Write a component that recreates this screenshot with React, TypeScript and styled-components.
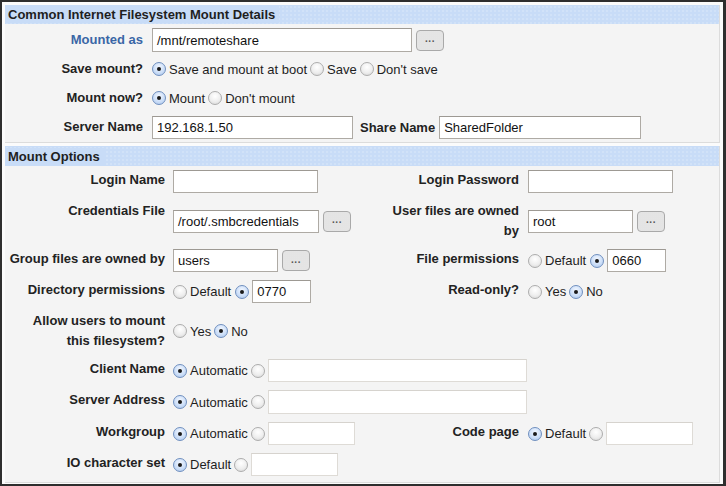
import React from "react";
import styled, { createGlobalStyle } from "styled-components";

const GlobalStyle = createGlobalStyle`
  html, body {
    margin: 0;
    padding: 0;
    background: #ffffff;
  }
  body {
    font-family: "Liberation Sans", Arial, sans-serif;
    font-size: 13px;
    color: #1e1e1e;
  }
`;

const dots = `radial-gradient(circle, rgba(255, 255, 255, 0.55) 0.5px, transparent 0.8px)`;

const Frame = styled.div`
  width: 726px;
  height: 486px;
  box-sizing: border-box;
  border: 2px solid #2e2e2e;
  border-right-width: 3px;
  background: #fbfbfb;
  padding: 3px 3px 2px 3px;
  display: flex;
  flex-direction: column;
  gap: 3px;
  overflow: hidden;
`;

const Section = styled.div<{ $grow?: boolean }>`
  background: #f4f4f4;
  border-right: 1px solid #dcdcdc;
  border-bottom: 1px solid #dcdcdc;
  display: flex;
  flex-direction: column;
  flex: ${(p) => (p.$grow ? 1 : "none")};
`;

const Header = styled.div<{ $h: number }>`
  height: ${(p) => p.$h}px;
  background-color: #c8dcf7;
  background-image: ${dots};
  background-size: 4px 4px;
  display: flex;
  align-items: center;
`;

const HeaderTitle = styled.span`
  background: #c8dcf7;
  font-weight: bold;
  font-size: 13px;
  color: #1f1f1f;
  padding: 0 4px 0 3px;
  line-height: 17px;
`;

const DetailsBody = styled.div`
  display: grid;
  grid-template-columns: 147px 1fr;
  grid-auto-rows: 24px;
  row-gap: 5px;
  padding: 4px 0 3px 0;
`;

const OptionsBody = styled.div`
  display: grid;
  grid-template-columns: 168px 215px 140px 1fr;
  row-gap: 8px;
  padding: 4px 0 6px 0;
`;

const Label = styled.div<{ $blue?: boolean }>`
  font-weight: bold;
  text-align: right;
  line-height: 20px;
  padding-right: 9px;
  color: ${(p) => (p.$blue ? "#3a66a6" : "#222222")};
  align-self: start;
`;

const DetailLabel = styled(Label)`
  align-self: center;
`;

const OptLabel = styled(Label)<{ $wide?: boolean }>`
  padding-left: ${(p) => (p.$wide ? 1 : 0)}px;
  padding-right: ${(p) => (p.$wide ? 9 : 8)}px;
`;

const Value = styled.div<{ $span?: number }>`
  display: flex;
  align-items: center;
  align-self: center;
  grid-column: span ${(p) => p.$span ?? 1};
  min-height: 23px;
`;

const TextInput = styled.div<{ $w: number; $h?: number; $off?: boolean }>`
  width: ${(p) => p.$w}px;
  height: ${(p) => p.$h ?? 23}px;
  box-sizing: border-box;
  background: #ffffff;
  border: 1px solid ${(p) => (p.$off ? "#dedbd6" : "#aeaaa4")};
  border-top-color: ${(p) => (p.$off ? "#d6d3ce" : "#9d9993")};
  padding: 0 4px;
  display: flex;
  align-items: center;
  font-size: 13px;
  color: #111111;
  white-space: nowrap;
  overflow: hidden;
`;

const DotsButton = styled.div`
  width: 28px;
  height: 21px;
  box-sizing: border-box;
  margin-left: 4px;
  border: 1px solid #a9a9a9;
  border-radius: 4px;
  background-color: #ededed;
  background-image: radial-gradient(circle, rgba(205, 205, 205, 0.9) 0.5px, transparent 0.8px);
  background-size: 2px 2px;
  display: flex;
  align-items: center;
  justify-content: center;
  font-size: 10px;
  font-weight: bold;
  letter-spacing: 0.5px;
  color: #555555;
  line-height: 1;
  padding-bottom: 2px;
`;

const Option = styled.span<{ $gapAfter?: number }>`
  display: inline-flex;
  align-items: center;
  margin-right: ${(p) => p.$gapAfter ?? 3}px;
  white-space: nowrap;
`;

const RadioDot = styled.span<{ $on: boolean }>`
  width: 14px;
  height: 14px;
  box-sizing: border-box;
  border-radius: 50%;
  margin-right: 3px;
  position: relative;
  flex: none;
  border: 1px solid ${(p) => (p.$on ? "#6f8fbf" : "#adadad")};
  background: ${(p) =>
    p.$on
      ? "radial-gradient(circle at 50% 35%, #f2f7ff 0%, #cddff8 55%, #a9c4ea 100%)"
      : "radial-gradient(circle at 50% 35%, #ffffff 0%, #eeeeee 55%, #d4d4d4 100%)"};
  &::after {
    content: "";
    display: ${(p) => (p.$on ? "block" : "none")};
    position: absolute;
    left: 50%;
    top: 50%;
    width: 4px;
    height: 4px;
    margin: -2px 0 0 -2px;
    border-radius: 50%;
    background: #1a1a1a;
  }
`;

const Inline = styled.span<{ $ml?: number }>`
  margin-left: ${(p) => p.$ml ?? 0}px;
  display: inline-flex;
  align-items: center;
`;

const InlineLabel = styled(Inline)`
  font-weight: bold;
  color: #222222;
`;

function Radio({ on, text, after }: { on: boolean; text?: string; after?: number }) {
  return (
    <Option $gapAfter={after}>
      <RadioDot $on={on} />
      {text}
    </Option>
  );
}

export default function App() {
  return (
    <>
      <GlobalStyle />
      <Frame>
        <Section>
          <Header $h={19}>
            <HeaderTitle>Common Internet Filesystem Mount Details</HeaderTitle>
          </Header>
          <DetailsBody>
            <DetailLabel $blue>Mounted as</DetailLabel>
            <Value>
              <TextInput $w={260} $h={24}>/mnt/remoteshare</TextInput>
              <DotsButton>...</DotsButton>
            </Value>

            <DetailLabel>Save mount?</DetailLabel>
            <Value>
              <Radio on text="Save and mount at boot" />
              <Radio on={false} text="Save" />
              <Radio on={false} text="Don't save" />
            </Value>

            <DetailLabel>Mount now?</DetailLabel>
            <Value>
              <Radio on text="Mount" />
              <Radio on={false} text="Don't mount" />
            </Value>

            <DetailLabel>Server Name</DetailLabel>
            <Value>
              <TextInput $w={201}>192.168.1.50</TextInput>
              <InlineLabel $ml={7}>Share Name</InlineLabel>
              <Inline $ml={4}>
                <TextInput $w={202}>SharedFolder</TextInput>
              </Inline>
            </Value>
          </DetailsBody>
        </Section>

        <Section $grow>
          <Header $h={20}>
            <HeaderTitle>Mount Options</HeaderTitle>
          </Header>
          <OptionsBody>
            <OptLabel>Login Name</OptLabel>
            <Value>
              <TextInput $w={145}></TextInput>
            </Value>
            <OptLabel $wide>Login Password</OptLabel>
            <Value>
              <TextInput $w={145}></TextInput>
            </Value>

            <OptLabel>Credentials File</OptLabel>
            <Value>
              <TextInput $w={146}>/root/.smbcredentials</TextInput>
              <DotsButton>...</DotsButton>
            </Value>
            <OptLabel $wide>User files are owned by</OptLabel>
            <Value>
              <TextInput $w={105}>root</TextInput>
              <DotsButton>...</DotsButton>
            </Value>

            <OptLabel>Group files are owned by</OptLabel>
            <Value>
              <TextInput $w={105}>users</TextInput>
              <DotsButton>...</DotsButton>
            </Value>
            <OptLabel $wide>File permissions</OptLabel>
            <Value>
              <Radio on={false} text="Default" after={4} />
              <Radio on after={0} />
              <TextInput $w={59}>0660</TextInput>
            </Value>

            <OptLabel>Directory permissions</OptLabel>
            <Value>
              <Radio on={false} text="Default" after={4} />
              <Radio on after={0} />
              <TextInput $w={59}>0770</TextInput>
            </Value>
            <OptLabel $wide>Read-only?</OptLabel>
            <Value>
              <Radio on={false} text="Yes" />
              <Radio on text="No" />
            </Value>

            <OptLabel>
              Allow users to mount
              <br />
              this filesystem?
            </OptLabel>
            <Value $span={3}>
              <Radio on={false} text="Yes" />
              <Radio on text="No" />
            </Value>

            <OptLabel>Client Name</OptLabel>
            <Value $span={3}>
              <Radio on text="Automatic" after={3} />
              <Radio on={false} after={0} />
              <TextInput $w={259} $off></TextInput>
            </Value>

            <OptLabel>Server Address</OptLabel>
            <Value $span={3}>
              <Radio on text="Automatic" after={3} />
              <Radio on={false} after={0} />
              <TextInput $w={259} $h={24} $off></TextInput>
            </Value>

            <OptLabel>Workgroup</OptLabel>
            <Value>
              <Radio on text="Automatic" after={3} />
              <Radio on={false} after={0} />
              <TextInput $w={87} $off></TextInput>
            </Value>
            <OptLabel $wide>Code page</OptLabel>
            <Value>
              <Radio on text="Default" after={3} />
              <Radio on={false} after={0} />
              <TextInput $w={87} $off></TextInput>
            </Value>

            <OptLabel>IO character set</OptLabel>
            <Value $span={3}>
              <Radio on text="Default" after={3} />
              <Radio on={false} after={0} />
              <TextInput $w={87} $off></TextInput>
            </Value>
          </OptionsBody>
        </Section>
      </Frame>
    </>
  );
}
